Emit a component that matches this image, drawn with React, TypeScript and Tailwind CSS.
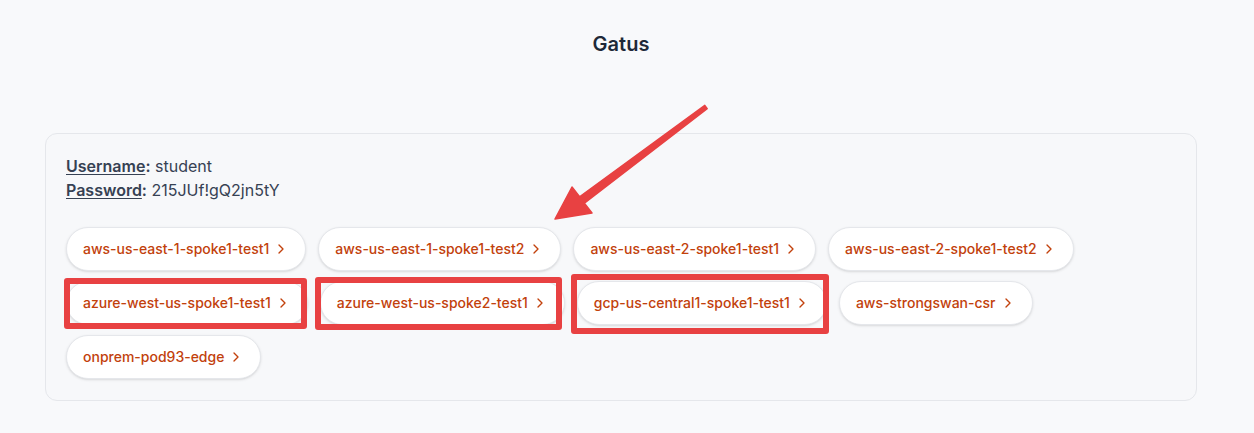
import { ChevronRight } from "lucide-react";

const endpoints = [
  "aws-us-east-1-spoke1-test1",
  "aws-us-east-1-spoke1-test2",
  "aws-us-east-2-spoke1-test1",
  "aws-us-east-2-spoke1-test2",
  "azure-west-us-spoke1-test1",
  "azure-west-us-spoke2-test1",
  "gcp-us-central1-spoke1-test1",
  "aws-strongswan-csr",
  "onprem-pod93-edge",
];

function EndpointPill({ name }: { name: string }) {
  return (
    <a className="flex h-[44px] items-center gap-1 rounded-full border border-gray-200 bg-white pl-4 pr-4 text-sm font-medium text-[#c2410c] shadow-sm">
      <span>{name}</span>
      <ChevronRight size={16} strokeWidth={2} />
    </a>
  );
}

export default function App() {
  return (
    <div
      className="relative min-h-[433px] bg-[#f8f9fb] text-gray-700"
      style={{ fontFamily: "Inter, 'Noto Sans', sans-serif" }}
    >
      <div className="ml-[45px] w-[1152px] pt-[30px]">
        <h1 className="text-center text-xl font-semibold text-gray-800">Gatus</h1>

        <div className="mt-[75px] rounded-xl border border-gray-200 bg-[#f7f8fa] px-5 pb-[21px] pt-5">
          <div className="text-base text-gray-700">
            <p>
              <span className="font-semibold underline underline-offset-2">Username</span>
              <span className="font-semibold">:</span> student
            </p>
            <p>
              <span className="font-semibold underline underline-offset-2">Password</span>
              <span className="font-semibold">:</span> 215JUf!gQ2jn5tY
            </p>
          </div>

          <div className="mt-[25px] flex flex-wrap gap-x-3 gap-y-[10px]">
            {endpoints.map((e) => (
              <EndpointPill key={e} name={e} />
            ))}
          </div>
        </div>
      </div>

      {/* annotation overlay */}
      <div className="pointer-events-none absolute left-[64px] top-[278px] h-[51px] w-[243px] rounded-[3px] border-[6px] border-[#e84142]" />
      <div className="pointer-events-none absolute left-[315px] top-[277px] h-[53px] w-[247px] rounded-[3px] border-[6px] border-[#e84142]" />
      <div className="pointer-events-none absolute left-[571px] top-[274px] h-[60px] w-[258px] rounded-[3px] border-[6px] border-[#e84142]" />

      <svg
        className="pointer-events-none absolute left-0 top-0"
        width="1254"
        height="433"
        viewBox="0 0 1254 433"
      >
        <polygon
          points="704.8,105.4 579.6,196.8 572,187 555,219 592,213 584.4,203.2 707.2,108.6"
          fill="#e84142"
          stroke="#e84142"
          strokeWidth="1.5"
          strokeLinejoin="round"
        />
      </svg>
    </div>
  );
}
